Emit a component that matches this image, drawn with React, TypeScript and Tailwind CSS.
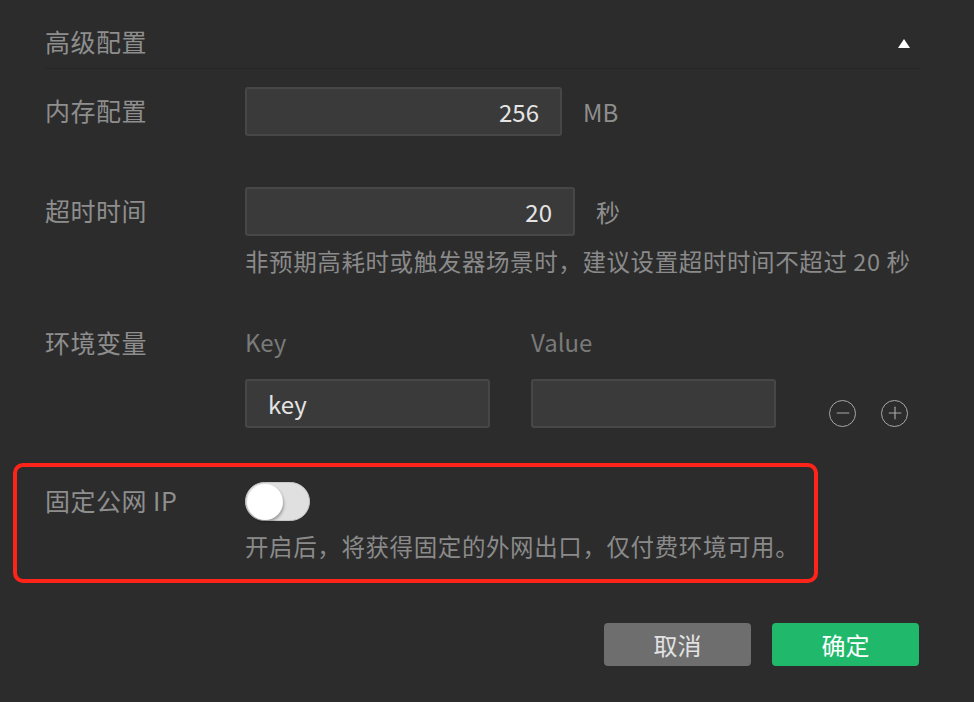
import { Minus, Plus } from 'lucide-react'

const font = { fontFamily: '"Noto Sans CJK SC", "Noto Sans", sans-serif' }

const Label = ({ children }: { children: React.ReactNode }) => (
  <div className="w-[200px] shrink-0 text-[25px] leading-[36px] tracking-[0.5px] text-[#8e8e8e] -translate-y-[2px]">{children}</div>
)

const Field = ({ value, width, align = 'right' }: { value: string; width: string; align?: 'left' | 'right' }) => (
  <div
    className={`${width} h-[49px] flex items-center rounded-[3px] border-2 border-[#474747] bg-[#3a3a3a] px-[21px] text-[24px] text-[#e4e4e4] ${
      align === 'right' ? 'justify-end' : 'justify-start'
    }`}
  >
    {value}
  </div>
)

const Hint = ({ children }: { children: React.ReactNode }) => (
  <div className="text-[23.5px] leading-[30px] tracking-[0.6px] text-[#8a8a8a] whitespace-nowrap -translate-y-[2px]">{children}</div>
)

const RoundIcon = ({ kind }: { kind: 'minus' | 'plus' }) => (
  <span className="w-[27px] h-[27px] rounded-full border-[1.5px] border-[#a8a8a8] flex items-center justify-center text-[#a8a8a8]">
    {kind === 'minus' ? <Minus size={20} strokeWidth={1.4} /> : <Plus size={20} strokeWidth={1.4} />}
  </span>
)

export default function App() {
  return (
    <div className="w-[974px] h-[702px] bg-[#2c2c2c] overflow-hidden" style={font}>
      <div className="pl-[45px] pr-[54px] pt-[25px]">
        {/* header */}
        <div className="flex items-center justify-between h-[36px]">
          <span className="text-[25px] tracking-[0.5px] text-[#8e8e8e] -translate-y-[1px]">高级配置</span>
          <span className="mr-[10px] w-0 h-0 border-l-[6px] border-r-[6px] border-b-[9px] border-l-transparent border-r-transparent border-b-white" />
        </div>
        <div className="mt-[7px] h-px bg-[#262626]" />

        {/* memory */}
        <div className="mt-[18px] flex items-center">
          <Label>内存配置</Label>
          <Field value="256" width="w-[317px]" />
          <span className="ml-[21px] text-[24px] text-[#8e8e8e]">MB</span>
        </div>

        {/* timeout */}
        <div className="mt-[51px] flex items-center">
          <Label>超时时间</Label>
          <Field value="20" width="w-[330px]" />
          <span className="ml-[21px] text-[24px] text-[#8e8e8e]">秒</span>
        </div>
        <div className="pl-[200px] mt-[12px]">
          <Hint>非预期高耗时或触发器场景时，建议设置超时时间不超过 20 秒</Hint>
        </div>

        {/* env */}
        <div className="mt-[48px] flex">
          <Label>环境变量</Label>
          <div className="flex flex-col">
            <div className="flex text-[24px] leading-[36px] text-[#7a7a7a] -translate-y-[2px]">
              <span className="w-[286px]">Key</span>
              <span>Value</span>
            </div>
            <div className="mt-[17px] flex items-center">
              <Field value="key" width="w-[245px]" align="left" />
              <div className="ml-[41px]">
                <Field value="" width="w-[245px]" />
              </div>
              <div className="ml-[53px] mt-[19px] flex gap-[25px]">
                <RoundIcon kind="minus" />
                <RoundIcon kind="plus" />
              </div>
            </div>
          </div>
        </div>
      </div>

      {/* fixed public ip */}
      <div className="ml-[13px] mt-[35px] w-[805px] h-[120px] rounded-[10px] border-4 border-[#ff2419] pl-[28px] pt-[15px]">
        <div className="flex items-center">
          <Label>固定公网 IP</Label>
          <div className="w-[65px] h-[39px] rounded-full bg-[#e0e0e0] border border-[#c8c8c8] flex items-center p-[1px]">
            <span className="w-[36px] h-[36px] rounded-full bg-white shadow-[1px_2px_3px_rgba(0,0,0,0.3)]" />
          </div>
        </div>
        <div className="pl-[200px] mt-[12px]">
          <Hint>开启后，将获得固定的外网出口，仅付费环境可用。</Hint>
        </div>
      </div>

      {/* actions */}
      <div className="mt-[40px] pr-[55px] flex justify-end gap-[21px]">
        <button className="w-[147px] h-[43px] rounded-[4px] bg-[#6e6e6e] text-[24px] text-[#e2e2e2]">取消</button>
        <button className="w-[147px] h-[43px] rounded-[4px] bg-[#20b96b] text-[24px] text-white">确定</button>
      </div>
    </div>
  )
}
